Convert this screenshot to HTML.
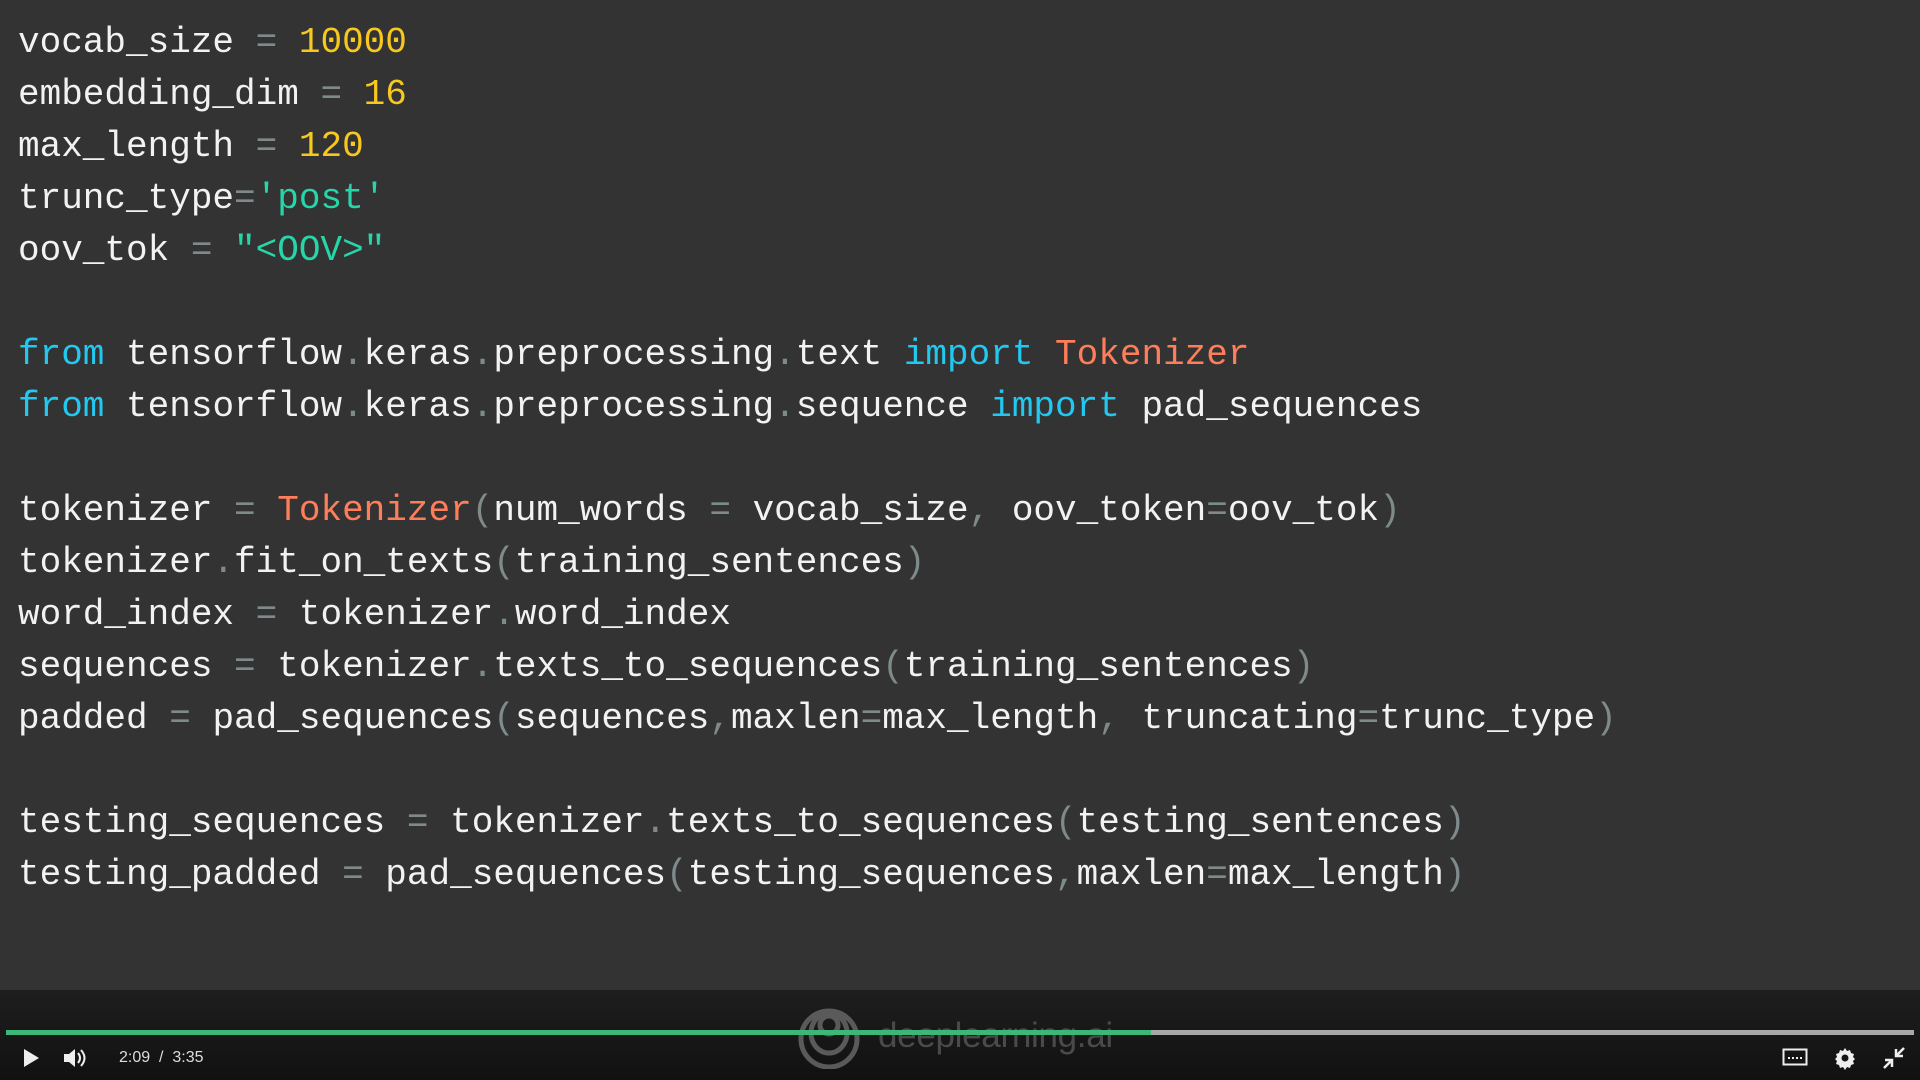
<!DOCTYPE html>
<html><head><meta charset="utf-8"><style>
html,body{margin:0;padding:0;width:1920px;height:1080px;overflow:hidden;background:#333333;}
pre{position:absolute;left:18px;top:17px;margin:0;font-family:"Liberation Mono",monospace;font-size:36px;line-height:52px;color:#f2f2f2;}
.y{color:#f7c81e}.s{color:#27d6a8}.k{color:#22c8ef}.o{color:#ff7e5a}.p{color:#7f8b8b}
.bar{position:absolute;left:0;top:990px;width:1920px;height:90px;background:linear-gradient(#1e1e1e,#111);}
.prog{position:absolute;left:6px;top:1030px;width:1908px;height:5px;background:#a8a8a8;}
.prog div{width:1145px;height:100%;background:#3bb877;}
.t{position:absolute;left:119px;top:1049px;font-family:"Liberation Sans",sans-serif;font-size:16px;color:#ddd;}
.logo{position:absolute;left:878px;top:1016px;font-family:"Liberation Sans",sans-serif;font-size:35px;color:#4a4a4a;letter-spacing:-0.3px;}
</style></head><body>
<pre>vocab_size <span class="p">=</span> <span class="y">10000</span>
embedding_dim <span class="p">=</span> <span class="y">16</span>
max_length <span class="p">=</span> <span class="y">120</span>
trunc_type<span class="p">=</span><span class="s">'post'</span>
oov_tok <span class="p">=</span> <span class="s">"&lt;OOV&gt;"</span>

<span class="k">from</span> tensorflow<span class="p">.</span>keras<span class="p">.</span>preprocessing<span class="p">.</span>text <span class="k">import</span> <span class="o">Tokenizer</span>
<span class="k">from</span> tensorflow<span class="p">.</span>keras<span class="p">.</span>preprocessing<span class="p">.</span>sequence <span class="k">import</span> pad_sequences

tokenizer <span class="p">=</span> <span class="o">Tokenizer</span><span class="p">(</span>num_words <span class="p">=</span> vocab_size<span class="p">,</span> oov_token<span class="p">=</span>oov_tok<span class="p">)</span>
tokenizer<span class="p">.</span>fit_on_texts<span class="p">(</span>training_sentences<span class="p">)</span>
word_index <span class="p">=</span> tokenizer<span class="p">.</span>word_index
sequences <span class="p">=</span> tokenizer<span class="p">.</span>texts_to_sequences<span class="p">(</span>training_sentences<span class="p">)</span>
padded <span class="p">=</span> pad_sequences<span class="p">(</span>sequences<span class="p">,</span>maxlen<span class="p">=</span>max_length<span class="p">,</span> truncating<span class="p">=</span>trunc_type<span class="p">)</span>

testing_sequences <span class="p">=</span> tokenizer<span class="p">.</span>texts_to_sequences<span class="p">(</span>testing_sentences<span class="p">)</span>
testing_padded <span class="p">=</span> pad_sequences<span class="p">(</span>testing_sequences<span class="p">,</span>maxlen<span class="p">=</span>max_length<span class="p">)</span></pre>
<div class="bar"></div>
<svg style="position:absolute;left:796px;top:1003px" width="66" height="66" viewBox="0 0 66 66">
<g fill="none" stroke="#5a5a5a" stroke-width="5"><ellipse cx="33" cy="36" rx="28" ry="28"/><ellipse cx="33" cy="30" rx="18" ry="20"/><circle cx="33" cy="22" r="9"/></g></svg>
<div class="logo">deeplearning.ai</div>
<div class="prog"><div></div></div>
<svg style="position:absolute;left:22px;top:1048px" width="18" height="20"><path d="M2 1 L17 10 L2 19Z" fill="#eee"/></svg>
<svg style="position:absolute;left:62px;top:1047px" width="26" height="22"><path d="M2 7h5l6-5v18l-6-5H2z" fill="#eee"/><path d="M16 6q4 5 0 10M19 3q7 8 0 16" stroke="#eee" stroke-width="2" fill="none"/></svg>
<div class="t">2:09 &nbsp;/ &nbsp;3:35</div>
<svg style="position:absolute;left:1782px;top:1048px" width="26" height="20"><rect x="1.5" y="1.5" width="23" height="15" fill="none" stroke="#eee" stroke-width="2"/><path d="M6 10h2M10 10h2M14 10h2M18 10h2" stroke="#eee" stroke-width="2"/></svg>
<svg style="position:absolute;left:1833px;top:1046px" width="24" height="24" viewBox="0 0 24 24"><path d="M12 2l2 3 3-1 1 3 3 1-1 3 2 2-2 2 1 3-3 1-1 3-3-1-2 3-2-3-3 1-1-3-3-1 1-3-2-2 2-2-1-3 3-1 1-3 3 1z" fill="#eee"/><circle cx="12" cy="12" r="3.5" fill="#151515"/></svg>
<svg style="position:absolute;left:1882px;top:1046px" width="24" height="24"><path d="M14 3v7h7M10 21v-7H3M14 10L22 2M10 14L2 22" stroke="#eee" stroke-width="2.5" fill="none"/></svg>
</body></html>
